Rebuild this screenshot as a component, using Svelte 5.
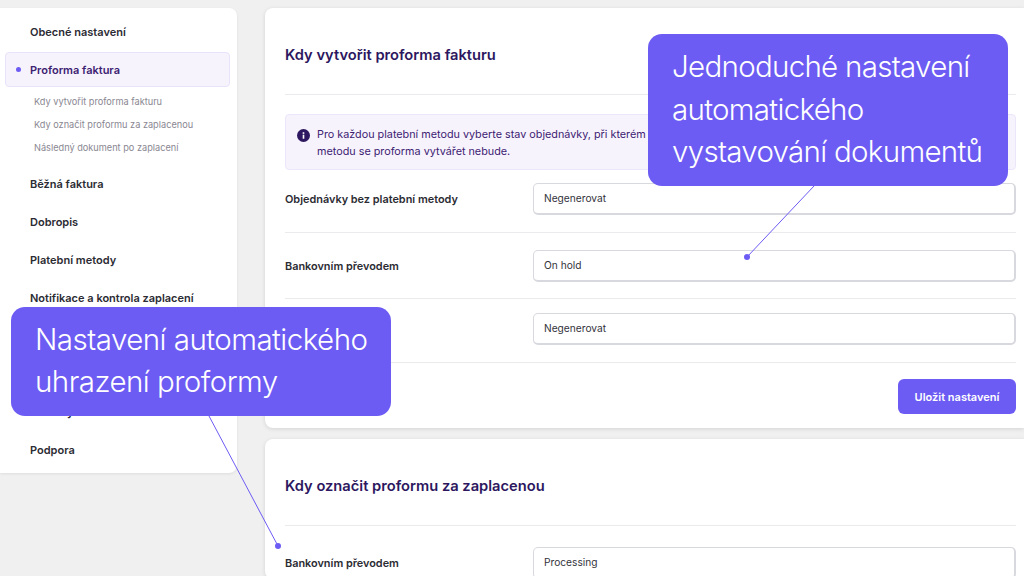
<script>
    const nav = ['Běžná faktura', 'Dobropis', 'Platební metody', 'Notifikace a kontrola zaplacení', 'Hromadné akce', 'Šablony', 'Doklady', 'Podpora'];
    const subnav = ['Kdy vytvořit proforma fakturu', 'Kdy označit proformu za zaplacenou', 'Následný dokument po zaplacení'];
    const methods = [
        { label: 'Objednávky bez platební metody', value: 'Negenerovat', cls: 'first' },
        { label: 'Bankovním převodem', value: 'On hold', cls: 'second' },
        { label: 'Dobírkou', value: 'Negenerovat', cls: 'third' }
    ];
</script>

<div class="page">
    <aside class="sidebar">
        <div class="nav-item">Obecné nastavení</div>
        <div class="nav-item active">Proforma faktura</div>
        <div class="subnav">
            {#each subnav as item}
                <div class="sub-item">{item}</div>
            {/each}
        </div>
        {#each nav as item}
            <div class="nav-item">{item}</div>
        {/each}
    </aside>

    <main class="content">
        <section class="card">
            <h2>Kdy vytvořit proforma fakturu</h2>
            <div class="notice">
                <svg class="info" viewBox="0 0 16 16" width="13" height="13">
                    <circle cx="8" cy="8" r="8" fill="#2c1760" />
                    <rect x="7" y="7" width="2" height="5" fill="#fff" />
                    <rect x="7" y="4" width="2" height="2" fill="#fff" />
                </svg>
                <p>Pro každou platební metodu vyberte stav objednávky, při kterém se má proforma vytvořit. Pokud vyberete Negenerovat, pro danou metodu se proforma vytvářet nebude.</p>
            </div>
            {#each methods as row}
                <div class="row {row.cls}">
                    <span class="label">{row.label}</span>
                    <div class="select">{row.value}</div>
                </div>
            {/each}
            <div class="actions">
                <button>Uložit nastavení</button>
            </div>
        </section>

        <section class="card">
            <h2>Kdy označit proformu za zaplacenou</h2>
            <div class="row last">
                <span class="label">Bankovním převodem</span>
                <div class="select">Processing</div>
            </div>
        </section>
    </main>

    <svg class="lines" viewBox="0 0 1024 576" width="1024" height="576">
        <line x1="814" y1="186" x2="747" y2="257" />
        <circle cx="747" cy="257" r="3" />
        <line x1="209" y1="416" x2="278" y2="546" />
        <circle cx="278" cy="546" r="3" />
    </svg>

    <div class="callout right">Jednoduché nastavení<br />automatického<br />vystavování dokumentů</div>
    <div class="callout left">Nastavení automatického<br />uhrazení proformy</div>
</div>

<style>
    :global(body) {
        background: #f0f0f1;
        font-family: Inter, "Liberation Sans", sans-serif;
    }

    .page {
        position: relative;
        width: 1024px;
        height: 576px;
        overflow: hidden;
        display: flex;
        align-items: flex-start;
        padding-top: 8px;
        box-sizing: border-box;
    }

    .sidebar {
        width: 237px;
        height: 465px;
        flex-shrink: 0;
        box-sizing: border-box;
        padding: 5px 7px 0 5px;
        background: #fff;
        border-radius: 0 8px 8px 0;
        box-shadow: 0 1px 3px rgba(0, 0, 0, 0.08);
    }

    .nav-item {
        position: relative;
        height: 38px;
        line-height: 38px;
        padding-left: 25px;
        font-size: 11px;
        font-weight: 600;
        color: #2b2b33;
    }

    .nav-item.active {
        height: 35px;
        margin: 1px 0 2px;
        box-sizing: border-box;
        line-height: 34px;
        background: #f7f3fd;
        border: 1px solid #e9e2fb;
        border-radius: 4px;
        padding-left: 24px;
        color: #3d2272;
    }

    .nav-item.active::before {
        content: '';
        position: absolute;
        left: 10px;
        top: 14px;
        width: 5px;
        height: 5px;
        border-radius: 50%;
        background: #6c5cf3;
    }

    .subnav {
        padding: 1px 0 6px 29px;
    }

    .sub-item {
        height: 23px;
        line-height: 23px;
        font-size: 9.2px;
        color: #8a8792;
    }

    .content {
        flex: 1;
        margin-left: 28px;
        display: flex;
        flex-direction: column;
        gap: 11px;
        min-width: 0;
    }

    .card {
        flex-shrink: 0;
        background: #fff;
        border-radius: 8px 0 0 8px;
        padding: 0 8px 0 20px;
        box-shadow: 0 1px 4px rgba(0, 0, 0, 0.12);
    }

    h2 {
        margin: 0;
        height: 87px;
        line-height: 94px;
        box-sizing: border-box;
        font-size: 14.7px;
        font-weight: 600;
        color: #2c1760;
        border-bottom: 1px solid #ebebee;
    }

    .notice {
        display: flex;
        gap: 7px;
        margin-top: 19px;
        height: 56px;
        box-sizing: border-box;
        padding: 11px 11px;
        background: #f7f3fd;
        border: 1px solid #ece6fb;
        border-radius: 4px;
    }

    .info {
        flex-shrink: 0;
        margin-top: 3px;
    }

    .notice p {
        margin: 0;
        font-size: 10.8px;
        line-height: 17px;
        color: #3d2272;
    }

    .row {
        display: grid;
        grid-template-columns: 248px 1fr;
        align-items: center;
        border-bottom: 1px solid #ebebee;
        box-sizing: border-box;
    }

    .row.first {
        height: 63px;
        padding: 13px 0 17px;
    }

    .row.second {
        height: 66px;
        padding: 17px 0 16px;
    }

    .row.third {
        height: 64px;
        padding: 14px 0 17px;
    }

    .row.last {
        height: 53px;
        border-bottom: none;
        padding: 21px 0 0;
    }

    .label {
        font-size: 10.9px;
        font-weight: 600;
        color: #2b2b33;
    }

    .select {
        height: 32px;
        line-height: 28px;
        box-sizing: border-box;
        padding-left: 10px;
        font-size: 10.2px;
        color: #33333b;
        background: #fff;
        border: 2px solid #d8d8df;
        border-top-width: 1px;
        border-left-width: 1px;
        border-radius: 5px;
    }

    .actions {
        display: flex;
        justify-content: flex-end;
        padding: 16px 0 14px;
    }

    button {
        width: 118px;
        height: 35px;
        border: none;
        border-radius: 6px;
        background: #6c5cf3;
        color: #fff;
        font-family: inherit;
        font-size: 11px;
        font-weight: 600;
    }

    .lines {
        position: absolute;
        top: 0;
        left: 0;
    }

    .lines line {
        stroke: #6c5cf3;
        stroke-width: 1;
    }

    .lines circle {
        fill: #6c5cf3;
    }

    .callout {
        position: absolute;
        background: #6c5cf3;
        color: #fff;
        font-weight: 300;
        font-size: 29.5px;
        letter-spacing: -0.7px;
        border-radius: 14px;
        white-space: nowrap;
        box-sizing: border-box;
    }

    .callout.right {
        left: 648px;
        top: 34px;
        width: 360px;
        height: 152px;
        padding: 11px 0 0 24px;
        line-height: 42.5px;
    }

    .callout.left {
        left: 11px;
        top: 307px;
        width: 380px;
        height: 109px;
        padding: 11px 0 0 24px;
        line-height: 42px;
        letter-spacing: -0.53px;
    }
</style>
